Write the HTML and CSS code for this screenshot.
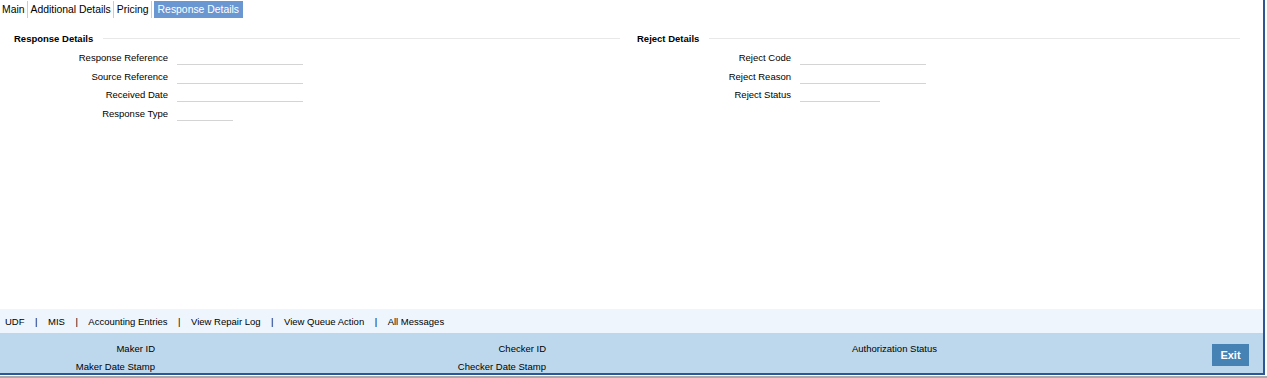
FILE: index.html
```html
<!DOCTYPE html>
<html lang="en">

<head>
    <title>Response Details</title>
    <meta charset="UTF-8">
    <meta name="viewport" content="width=device-width, initial-scale=1">
    <link rel="stylesheet" href="styles.css">
</head>

<body>
    <div class="page">
        <div class="tabs">
            <span class="tab">Main</span>
            <span class="tab">Additional Details</span>
            <span class="tab">Pricing</span>
            <span class="tab active">Response Details</span>
        </div>

        <div class="content">
            <div class="section">
                <div class="legend"><span>Response Details</span></div>
                <div class="row"><label>Response Reference</label><span class="field"></span></div>
                <div class="row"><label>Source Reference</label><span class="field"></span></div>
                <div class="row"><label>Received Date</label><span class="field"></span></div>
                <div class="row"><label>Response Type</label><span class="field short"></span></div>
            </div>
            <div class="section">
                <div class="legend"><span>Reject Details</span></div>
                <div class="row"><label>Reject Code</label><span class="field"></span></div>
                <div class="row"><label>Reject Reason</label><span class="field"></span></div>
                <div class="row"><label>Reject Status</label><span class="field mid"></span></div>
            </div>
        </div>

        <div class="links">
            <a>UDF</a><span>|</span>
            <a>MIS</a><span>|</span>
            <a>Accounting Entries</a><span>|</span>
            <a>View Repair Log</a><span>|</span>
            <a>View Queue Action</a><span>|</span>
            <a>All Messages</a>
        </div>

        <div class="footer">
            <div class="audit">
                <label>Maker ID</label><span></span>
                <label>Maker Date Stamp</label><span></span>
            </div>
            <div class="audit">
                <label>Checker ID</label><span></span>
                <label>Checker Date Stamp</label><span></span>
            </div>
            <div class="audit">
                <label>Authorization Status</label><span></span>
            </div>
            <button class="exit">Exit</button>
        </div>
    </div>
    <div class="under"></div>
</body>

</html>
```

FILE: styles.css
```css
* {
    margin: 0;
    padding: 0;
    box-sizing: border-box;
}

body {
    font-family: "Liberation Sans", Arial, sans-serif;
    font-size: 9.5px;
    color: #000;
    background: #fff;
}

.page {
    width: 1265px;
    height: 375px;
    border-right: 2px solid #2b5797;
    border-bottom: 2px solid #2b5797;
    display: flex;
    flex-direction: column;
}

.under {
    width: 1267px;
    height: 3px;
    border-top: 1px solid #fff;
    border-bottom: 2px solid #a9a9a9;
}

.tabs {
    display: flex;
    height: 18px;
    padding: 1px 0 0 1px;
    font-size: 10.4px;
}

.tab {
    height: 17px;
    line-height: 18px;
    padding: 0 2px 0 1px;
    border-right: 1px solid #ccc;
    margin-right: 2px;
}

.tab.active {
    background: #6a96d1;
    color: #fff;
    border-right: none;
    padding: 0 4px 0 4px;
}

.content {
    flex: 1;
    display: grid;
    grid-template-columns: 606px 603px;
    column-gap: 17px;
    padding: 13px 0 0 14px;
}

.legend {
    display: flex;
    align-items: center;
    font-weight: bold;
    height: 14px;
    margin-bottom: 3px;
}

.legend::after {
    content: "";
    flex: 1;
    height: 1px;
    background: #e8e8e8;
    margin-left: 10px;
}

.row {
    display: flex;
    align-items: center;
    height: 18.7px;
}

.row label {
    width: 154px;
    text-align: right;
    margin-right: 9px;
}

.field {
    display: block;
    width: 126px;
    height: 14px;
    margin-top: 1px;
    border-bottom: 1px solid #d4d4d4;
}

.field.short {
    width: 56px;
}

.field.mid {
    width: 80px;
}

.links {
    height: 24px;
    background: #eef5fd;
    display: flex;
    align-items: center;
    gap: 10.5px;
    padding: 0 0 0 5px;
}

.footer {
    height: 40px;
    background: #bdd8ec;
    display: flex;
    align-items: flex-start;
    padding-top: 6px;
    position: relative;
}

.audit {
    width: 391px;
    display: grid;
    grid-template-columns: 155px 1fr;
    grid-auto-rows: 18px;
    align-items: center;
}

.audit label {
    text-align: right;
}

.exit {
    position: absolute;
    right: 14px;
    top: 11px;
    width: 37px;
    height: 22px;
    border: none;
    background: #4682b4;
    color: #fff;
    font-family: "Liberation Sans", Arial, sans-serif;
    font-size: 11px;
    font-weight: bold;
}
```
